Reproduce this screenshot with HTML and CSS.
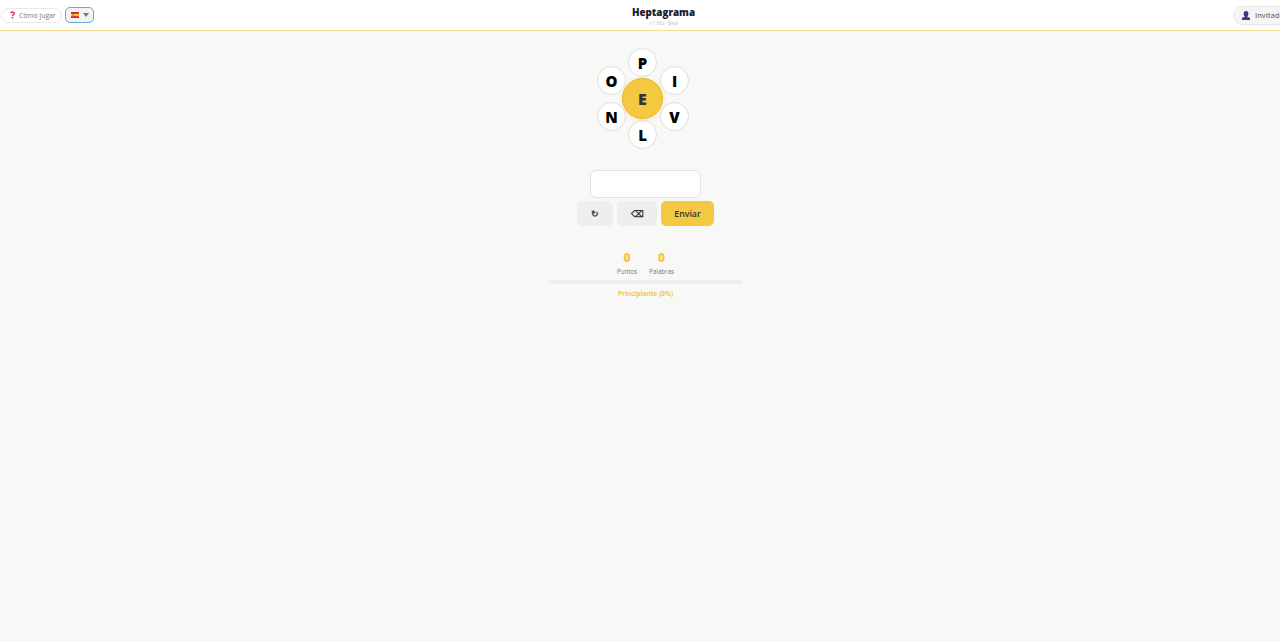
FILE: index.html
```html
<!DOCTYPE html>
<html lang="es">
  <head>
    <meta charset="utf-8" />
    <meta name="viewport" content="width=device-width, initial-scale=1" />
    <title>Heptagrama</title>
    <link rel="stylesheet" href="styles.css">
  </head>

  <body>
    <header class="header">
      <div class="header-left">
        <button class="help-btn">
          <svg class="help-icon" viewBox="0 0 6 9">
            <path d="M1 2.5C1 .8 5 .4 5 2.6C5 4.2 3 4 3 5.8" fill="none" stroke="#e0386a" stroke-width="1.9" />
            <circle cx="3" cy="7.8" r="1.1" fill="#e0386a" />
          </svg>
          Cómo jugar
        </button>
        <button class="lang-btn" aria-label="Español">
          <svg class="flag" viewBox="0 0 8 6">
            <path fill="#d8252c" d="M0 0h8v6H0z" />
            <path fill="#f8c32c" d="M0 1.8h8v2.4H0z" />
            <path fill="#c8642c" d="M1.3 2.2h1.4v1.6H1.3z" />
          </svg>
          <svg class="caret" viewBox="0 0 6 4"><path fill="#777" d="M0 0h6L3 4z" /></svg>
        </button>
      </div>
      <div class="brand">
        <h1 class="title">Heptagrama</h1>
        <div class="version">v 1.0b2 · Beta</div>
      </div>
      <button class="user-btn">
        <svg class="user-icon" viewBox="0 0 8 9">
          <ellipse cx="4" cy="2.8" rx="2.4" ry="2.8" fill="#51307a" />
          <path fill="#51307a" d="M2.6 4h2.8v2l2.6.8V9H0V6.800l2.600-.8z" />
        </svg>
        Invitado
      </button>
    </header>

    <main class="game">
      <div class="hive">
        <button class="letter top">P</button>
        <button class="letter top-right">I</button>
        <button class="letter bottom-right">V</button>
        <button class="letter bottom">L</button>
        <button class="letter bottom-left">N</button>
        <button class="letter top-left">O</button>
        <button class="letter center">E</button>
      </div>

      <input class="word" type="text" aria-label="Palabra" />

      <div class="actions">
        <button class="btn shuffle">↻</button>
        <button class="btn delete">⌫</button>
        <button class="btn submit">Enviar</button>
      </div>

      <div class="stats">
        <div class="stat">
          <div class="stat-value">0</div>
          <div class="stat-label">Puntos</div>
        </div>
        <div class="stat">
          <div class="stat-value">0</div>
          <div class="stat-label">Palabras</div>
        </div>
      </div>
      <div class="progress"></div>
      <div class="rank">Principiante (0%)</div>
    </main>
  </body>
</html>
```
FILE: styles.css
```css
* {
  box-sizing: border-box;
}

body {
  margin: 0;
  min-height: 100vh;
  overflow: hidden;
  background: #f8f8f6;
  color: #1a1a2e;
  font-family: "Open Sans", "Noto Sans", sans-serif;
}

button {
  margin: 0;
  padding: 0;
  font-family: inherit;
  cursor: pointer;
}

.header {
  display: grid;
  grid-template-columns: 1fr auto 1fr;
  width: 1327px;
  height: 31px;
  background: #fff;
  border-bottom: 1px solid #f5dc93;
}

.header-left {
  display: flex;
  align-items: center;
  gap: 3px;
}

.help-btn {
  display: flex;
  align-items: center;
  gap: 4px;
  width: 61px;
  height: 15px;
  margin-left: 1px;
  padding-left: 8px;
  border: 1px solid #e8e8e8;
  border-radius: 8px;
  background: #fff;
  color: #777;
  font-size: 6.8px;
  white-space: nowrap;
}

.help-icon {
  width: 5px;
  height: 8px;
}

.lang-btn {
  display: flex;
  align-items: center;
  gap: 4px;
  width: 29px;
  height: 16px;
  padding-left: 5px;
  border: 1px solid #6fa5d2;
  border-radius: 5px;
  background: #f1f3f5;
}

.flag {
  width: 8px;
  height: 6px;
}

.caret {
  width: 6px;
  height: 4px;
}

.brand {
  text-align: center;
}

.title {
  margin: 5px 0 0;
  font-size: 9.8px;
  font-weight: 800;
  line-height: 15px;
}

.version {
  color: #bbb;
  font-size: 4.6px;
  line-height: 7px;
}

.user-btn {
  display: flex;
  justify-self: end;
  align-self: center;
  align-items: center;
  gap: 5px;
  width: 94px;
  height: 19px;
  padding-left: 8px;
  border: 1px solid #e8e8e8;
  border-radius: 10px;
  background: #f5f5f5;
  color: #777;
  font-size: 7.3px;
  font-weight: 600;
}

.user-icon {
  width: 8px;
  height: 9px;
}

.game {
  display: flex;
  flex-direction: column;
  align-items: center;
  width: 1291px;
  padding-top: 16px;
}

/* the six outer letters sit on a ring around the center one */
.hive {
  position: relative;
  width: 97px;
  height: 104px;
}

.letter {
  position: absolute;
  width: 29px;
  height: 29px;
  border: 1.5px solid #dedede;
  border-radius: 50%;
  background: #fff;
  color: #000;
  font-size: 15px;
  font-weight: 800;
  line-height: 28px;
}

.top { left: 31px; top: 1px; }
.top-right { left: 63px; top: 19px; }
.bottom-right { left: 63px; top: 55px; }
.bottom { left: 31px; top: 73px; }
.bottom-left { left: 0; top: 55px; }
.top-left { left: 0; top: 19px; }

.center {
  left: 25px;
  top: 31px;
  width: 41px;
  height: 41px;
  border-color: #e6b52c;
  background: #f4c840;
  box-shadow: 0 1px 5px rgba(244, 200, 64, 0.35);
  color: #333;
  font-size: 16px;
  line-height: 40px;
}

.word {
  width: 111px;
  height: 28px;
  margin-top: 19px;
  border: 1px solid #e4e4e4;
  border-radius: 6px;
  background: #fff;
}

.actions {
  display: flex;
  gap: 4px;
  margin-top: 3px;
}

.btn {
  height: 25px;
  border: 0;
  border-radius: 5px;
  background: #eee;
  color: #333;
  font-size: 8.8px;
  font-weight: 600;
}

.shuffle { width: 36px; }
.delete { width: 40px; }

.submit {
  width: 53px;
  background: #f4c840;
}

.stats {
  display: flex;
  gap: 12px;
  margin-top: 23px;
  text-align: center;
}

.stat-value {
  color: #f4c840;
  font-size: 12px;
  font-weight: 800;
  line-height: 17px;
}

.stat-label {
  color: #777;
  font-size: 6.2px;
  line-height: 12px;
}

.progress {
  width: 195px;
  height: 4px;
  margin-top: 2px;
  border-radius: 2px;
  background: #eee;
}

.rank {
  margin-top: 5px;
  color: #f4c840;
  font-size: 6.5px;
  font-weight: 700;
  line-height: 10px;
}
```
